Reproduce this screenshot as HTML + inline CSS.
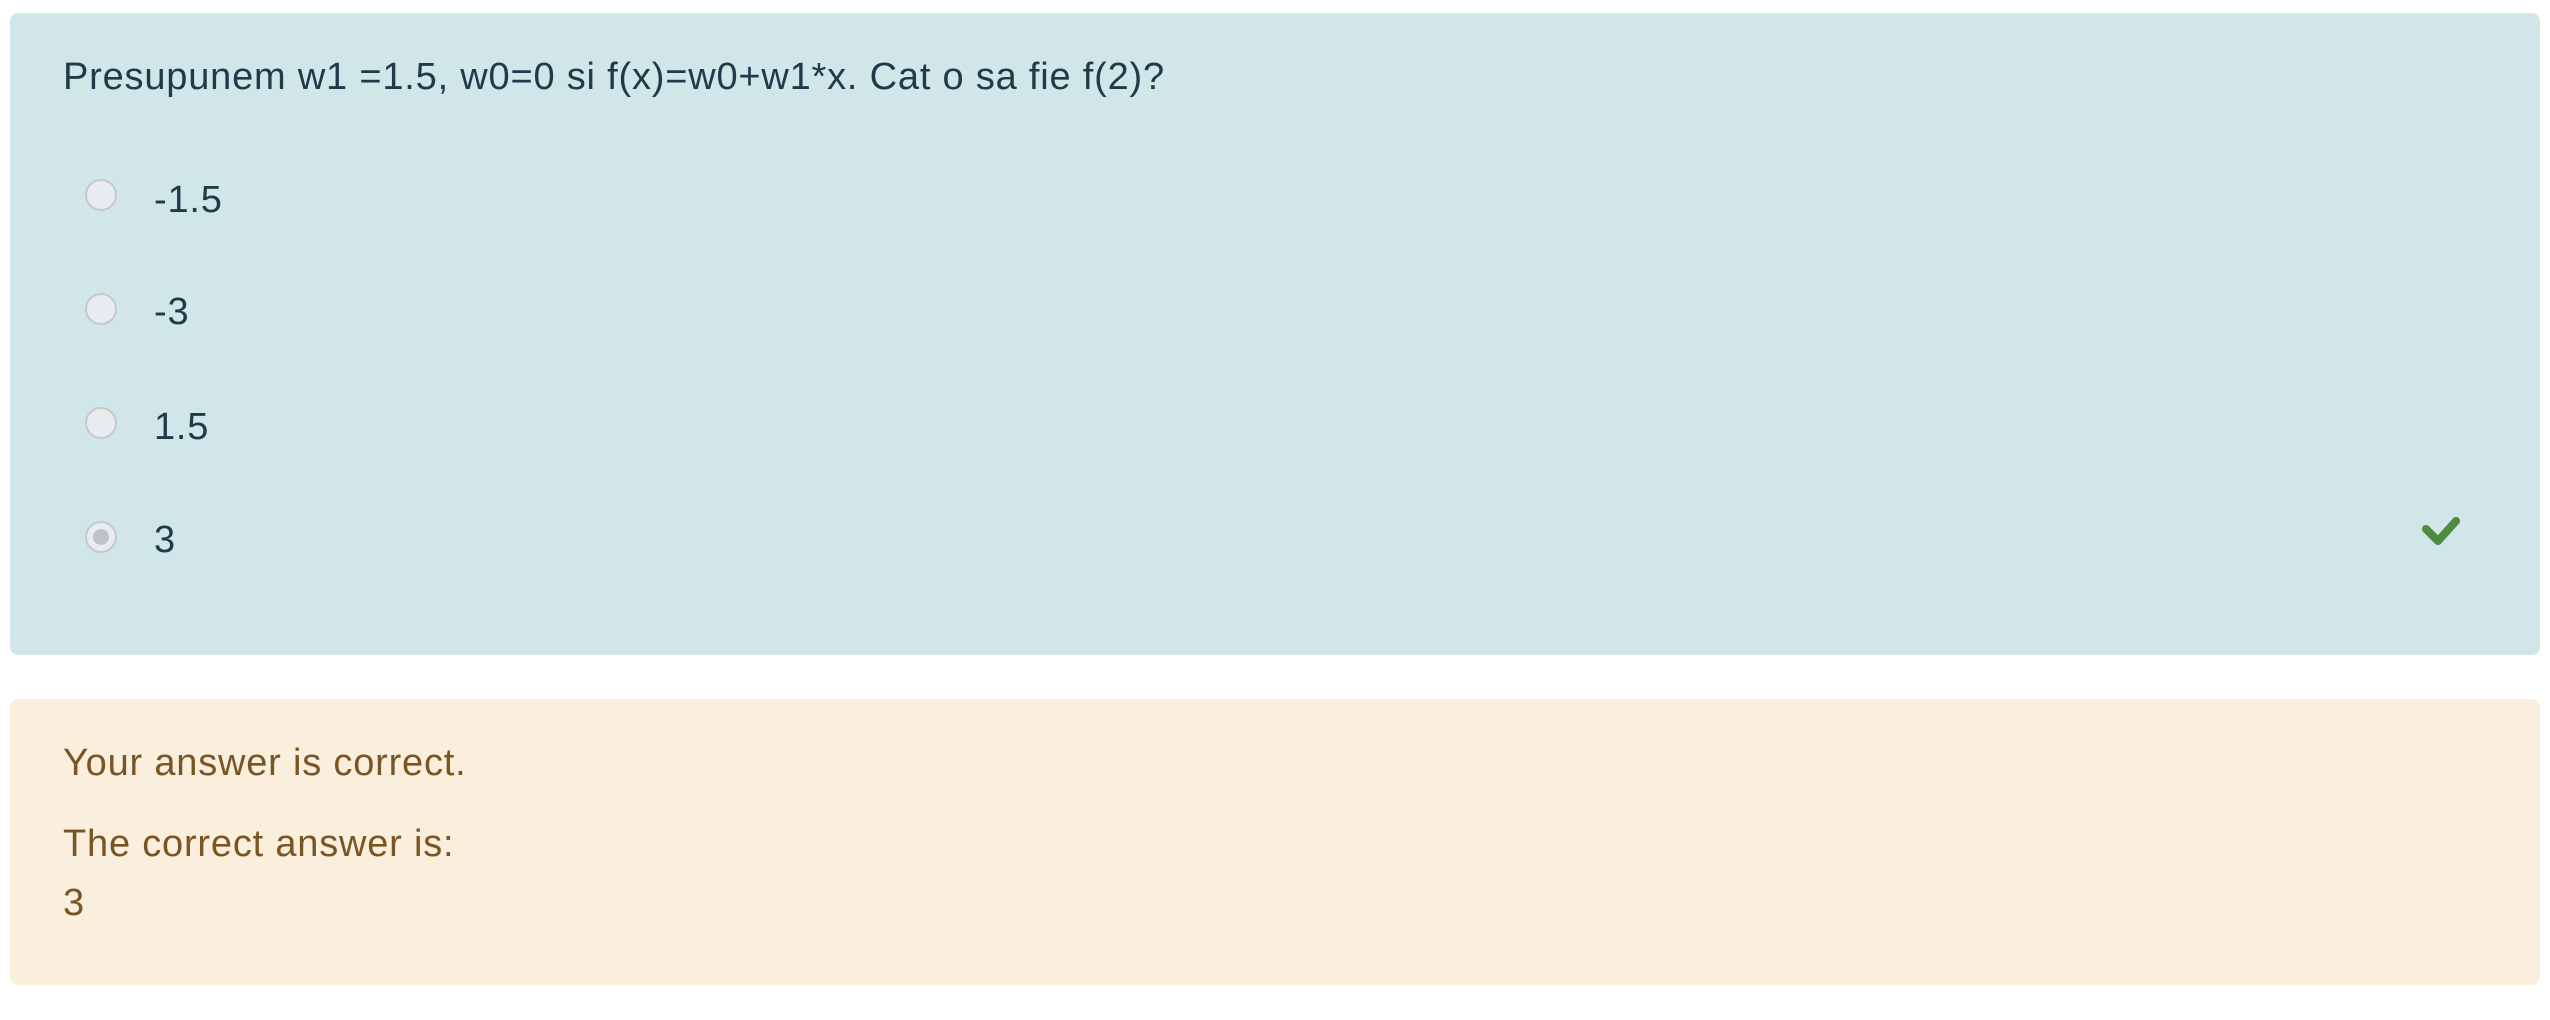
<!DOCTYPE html>
<html><head><meta charset="utf-8"><style>
body{margin:0;width:2550px;height:1020px;background:#fff;font-family:"Liberation Sans",sans-serif;position:relative;overflow:hidden}
.b1{position:absolute;left:10px;top:13px;width:2530px;height:642px;background:#d1e6e9;border-radius:8px}
.b2{position:absolute;left:10px;top:699px;width:2530px;height:286px;background:#f9efdc;border-radius:8px}
.t{position:absolute;font-size:38px;letter-spacing:0.8px;line-height:1;white-space:nowrap}
.q{color:#1f3b4a}
.f{color:#7a5523}
.r{position:absolute;width:28px;height:28px;border:2px solid #c6c9cb;border-radius:50%;background:#e9ecee}
.r.s::after{content:"";position:absolute;left:6px;top:6px;width:16px;height:16px;border-radius:50%;background:#bfc3c6}
</style></head><body>
<div class="b1"></div>
<div class="b2"></div>
<div class="t q" style="left:63px;top:58px">Presupunem w1 =1.5, w0=0 si f(x)=w0+w1*x. Cat o sa fie f(2)?</div>
<div class="r" style="left:85px;top:179px"></div><div class="t q" style="left:154px;top:181px">-1.5</div>
<div class="r" style="left:85px;top:293px"></div><div class="t q" style="left:154px;top:293px">-3</div>
<div class="r" style="left:85px;top:407px"></div><div class="t q" style="left:154px;top:408px">1.5</div>
<div class="r s" style="left:85px;top:521px"></div><div class="t q" style="left:154px;top:521px">3</div>
<svg style="position:absolute;left:2421px;top:512px" width="40" height="36" viewBox="0 0 40 36"><path d="M5 17 L17 29 L35 9" fill="none" stroke="#4e8a3f" stroke-width="8" stroke-linecap="round" stroke-linejoin="round"/></svg>
<div class="t f" style="left:63px;top:744px">Your answer is correct.</div>
<div class="t f" style="left:63px;top:825px">The correct answer is:</div>
<div class="t f" style="left:63px;top:884px">3</div>
</body></html>
